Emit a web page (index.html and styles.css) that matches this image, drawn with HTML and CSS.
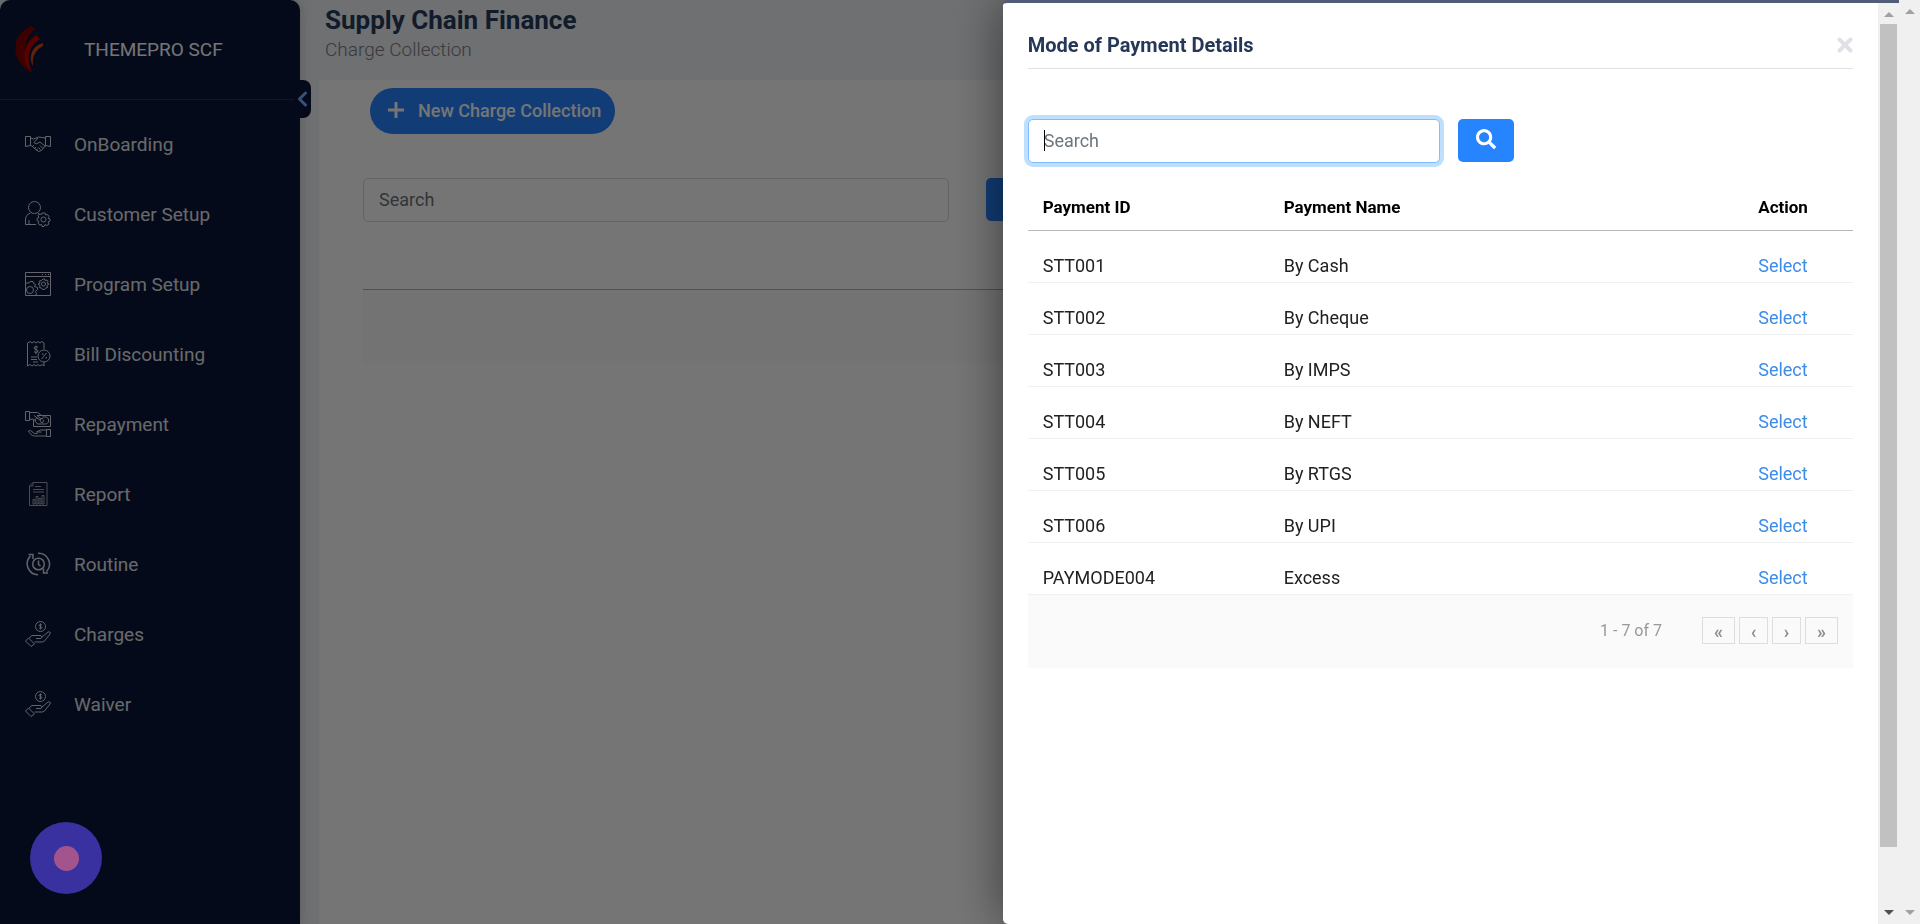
FILE: index.html
```
<!DOCTYPE html>
<html lang="en">
<head>
<meta charset="utf-8">
<title>Supply Chain Finance - Charge Collection</title>
<link rel="stylesheet" href="styles.css">
</head>
<body>
<div class="app">
  <aside class="sidebar">
    <div class="brand">
      <svg class="logo" viewBox="0 0 30 48" aria-hidden="true">
        <path fill="#860000" d="M16 0 20 3C9 12 6 30 17 47-4 37-6 10 16 0Z"/>
        <path fill="#c40000" d="M21 9 25 13C13 20 11 33 17 46 6 38 7 18 21 9Z"/>
        <path fill="#d84818" d="M28 17V20C20 24 17 31 18 40 13 31 17 20 28 17Z"/>
      </svg>
      <span class="brand-name">THEMEPRO SCF</span>
    </div>
    <button class="toggle" aria-label="Collapse menu"><svg viewBox="0 0 12 16"><path d="M8.500 2 2.500 8l6 6"/></svg></button>
    <nav class="menu">
      <a class="menu-item" href="#"><svg class="icon" viewBox="0 0 26 26"><path d="M.5 5.500h5v9l-5 1zM25.500 5.500h-5v9l5 1zM5.500 7l3 1 5-2 7 1M5.500 14l8 6.500 3-1 4-5M13 7l-4 4.500 2 1.500 4-2 5.500 4.500M7 16l2-2M9 18l2-2M11 19.500l2-2M15 14.500l3 3M13.500 16.500l2 2"/></svg>OnBoarding</a>
      <a class="menu-item" href="#"><svg class="icon" viewBox="0 0 26 26"><circle cx="9.500" cy="6.500" r="6"/><path d="M11 23.500H.5V19c0-4 2-6 5-7M4 23v-4M13 12l2 2"/><circle cx="18.500" cy="18.500" r="2.500"/><path d="m17 12 3 0 .5 2 2-.5 1.500 2-1 1.500 2 1v2l-2 1 1 2-2 1.500-2-1-1 2h-2l-.5-2-2 .5-1.500-2 1-1.500-2-1v-2l2-1-1-2 1.500-1.500 2 .5z"/></svg>Customer Setup</a>
      <a class="menu-item" href="#"><svg class="icon" viewBox="0 0 26 26"><path d="M.5 1.500h25v23H.5zM.5 5.500h25M17 3.500h1M20 3.500h1M23 3.500h1"/><circle cx="5" cy="19" r="3.500"/><circle cx="18.500" cy="13" r="2"/><path d="M1 12h3l1-1.500h3l.5 2 2 1-1 2 3 1v2l-2 2 1 2-1 2M18 8l1.500 0 .5 1.500 2-.5 1 1.500-1 1.500 2 1-2 1.500.5 2-2 .5-1 1.500h-2l-1-1.500-2-.5.5-2-2-1.500 2-1-.5-2 2-.5z"/></svg>Program Setup</a>
      <a class="menu-item" href="#"><svg class="icon" viewBox="0 0 26 26"><path d="M19 8V2l-2-1.500-2 1.500-2-1.500L11 2 9 .5 7 2 5 .5 2.500 2v23l2.500-1.500L7 25l2-1.500 2 1.500 2-1.500 2 1.500 2-1.500 2 1.500v-4M6 16h6M6 18.500h6M8 21h5M13 6.500c-1-1.500-4-1-4 .5 0 2 4 1 4 3s-3 2-4 .5M11 4.500V13"/><circle cx="19" cy="15" r="6"/><path d="m16.500 18 5-6M17 13h1v1M20.500 17h1v-1"/></svg>Bill Discounting</a>
      <a class="menu-item" href="#"><svg class="icon" viewBox="0 0 26 26"><path d="M.5.5h4v9h-4zM4.500 1.500h8l4 3M4.500 8.500 8 8l3 2M9 4.500l5 4 2-.5-4-3.500h13.500v11h-17V9M12 6.500l-1.500 2v2l2 2.500h9l2-2v-3l-2-2h-4"/><path d="M18 7.500c-3-1-4 4-1 4 2 0 2-2 1-3M21.500 18.500h4v7h-4zM21.500 19h-6l-4 2h5M21.500 25H9.500c-3 0-5-3-6-5l2-.5 4 3h3"/></svg>Repayment</a>
      <a class="menu-item" href="#"><svg class="icon faint" viewBox="0 0 26 26"><path d="M8 1.500h14v23H4.500V5zM8 1.500V5H4.500M10 5.500h6M8 8.500h11M8 11h11M8 18.500h2V23H8zM11 15.500h2V23h-2zM14 17.500h2V23h-2zM17 14.500h2V23h-2z"/></svg>Report</a>
      <a class="menu-item" href="#"><svg class="icon" viewBox="0 0 26 26"><g stroke-width="1.500"><circle cx="13.500" cy="13" r="5.800"/><path d="M13.500 9.500v4l2 1.500M13 2.200a11 11 0 0 1 8.500 18.500M13 23.800A11 11 0 0 1 5.500 5M3.500 3.500H8V8M18.500 17.500V22H23"/></g></svg>Routine</a>
      <a class="menu-item" href="#"><svg class="icon" viewBox="0 0 26 26"><circle cx="15.500" cy="5.500" r="5"/><path d="M17 4c-1-1-3-.5-3 .5s3 1 3 2-2 1.500-3 .5M15.500 2.500v6M.5 20l3-3 6 6-3.500 2.500zM4 17l3-2.500h9l1 1.500-1 1.500h-5M17 16l6-5c2-.5 3 .5 2 2l-5.500 7-2 1h-8"/></svg>Charges</a>
      <a class="menu-item" href="#"><svg class="icon" viewBox="0 0 26 26"><circle cx="15.500" cy="5.500" r="5"/><path d="M17 4c-1-1-3-.5-3 .5s3 1 3 2-2 1.500-3 .5M15.500 2.500v6M.5 20l3-3 6 6-3.500 2.500zM4 17l3-2.500h9l1 1.500-1 1.500h-5M17 16l6-5c2-.5 3 .5 2 2l-5.500 7-2 1h-8"/></svg>Waiver</a>
    </nav>
  </aside>
  <main class="main">
    <header class="page-head">
      <h1 class="page-title">Supply Chain Finance</h1>
      <p class="page-sub">Charge Collection</p>
    </header>
    <section class="content">
      <button class="new-btn"><svg viewBox="0 0 16 16" aria-hidden="true"><path d="M8 1v14M1 8h14"/></svg>New Charge Collection</button>
      <div class="search-row">
        <input class="field main-field" type="text" placeholder="Search" aria-label="Search charges">
        <button class="search-btn" aria-label="Search charges"></button>
      </div>
      <div class="empty-grid"></div>
    </section>
  </main>
  <div class="scrollbar"><i class="up"></i><i class="down"></i></div>
</div>
<div class="overlay">
  <div class="modal" role="dialog" aria-labelledby="dialog-title">
    <div class="modal-body">
      <header class="modal-head">
        <h2 class="modal-title" id="dialog-title">Mode of Payment Details</h2>
        <button class="close" aria-label="Close"><svg viewBox="0 0 16 16"><path d="m2.500 2.500 11 11M13.500 2.500l-11 11"/></svg></button>
      </header>
      <div class="modal-search">
        <div class="field-wrap">
          <input class="field active" type="text" placeholder="Search" aria-label="Search payment modes">
          <span class="caret"></span>
        </div>
        <button class="search-btn" aria-label="Search payment modes"><svg viewBox="0 0 512 512"><path d="M505 442.700L405.300 343c-4.500-4.500-10.600-7-17-7H372c27.600-35.300 44-79.700 44-128C416 93.100 322.900 0 208 0S0 93.100 0 208s93.100 208 208 208c48.300 0 92.700-16.400 128-44v16.300c0 6.400 2.500 12.500 7 17l99.700 99.700c9.400 9.400 24.600 9.400 33.900 0l28.300-28.300c9.400-9.400 9.400-24.600.1-34zM208 336c-70.700 0-128-57.200-128-128 0-70.700 57.200-128 128-128 70.700 0 128 57.200 128 128 0 70.700-57.200 128-128 128z"/></svg></button>
      </div>
      <table class="grid">
        <thead><tr><th class="col-id">Payment ID</th><th class="col-name">Payment Name</th><th>Action</th></tr></thead>
        <tbody>
          <tr><td>STT001</td><td>By Cash</td><td><a href="#">Select</a></td></tr>
          <tr><td>STT002</td><td>By Cheque</td><td><a href="#">Select</a></td></tr>
          <tr><td>STT003</td><td>By IMPS</td><td><a href="#">Select</a></td></tr>
          <tr><td>STT004</td><td>By NEFT</td><td><a href="#">Select</a></td></tr>
          <tr><td>STT005</td><td>By RTGS</td><td><a href="#">Select</a></td></tr>
          <tr><td>STT006</td><td>By UPI</td><td><a href="#">Select</a></td></tr>
          <tr><td>PAYMODE004</td><td>Excess</td><td><a href="#">Select</a></td></tr>
        </tbody>
      </table>
      <footer class="pager">
        <span class="range">1 - 7 of 7</span>
        <button class="page-btn wide">«</button>
        <button class="page-btn">‹</button>
        <button class="page-btn">›</button>
        <button class="page-btn wide">»</button>
      </footer>
    </div>
    <div class="scrollbar inner"><i class="up"></i><i class="thumb"></i><i class="down"></i></div>
  </div>
</div>
<button class="recorder" aria-label="Recorder"><span></span></button>
</body>
</html>
```
FILE: styles.css
```
* { box-sizing: border-box; }
body { margin: 0; font-family: Roboto, "Liberation Sans", sans-serif; font-size: 18px; background: #f0f3f8; overflow: hidden; }
button { font: inherit; border: 0; padding: 0; cursor: pointer; }
h1, h2, p { margin: 0; }
a { text-decoration: none; }

.app { display: flex; height: 100vh; }

.sidebar { position: relative; flex: 0 0 300px; background: #091639; color: #fff; border-radius: 10px 10px 0 0; box-shadow: 0 0 12px rgba(0, 0, 0, .2); }
.brand { display: flex; align-items: center; height: 100px; padding-left: 15px; margin-right: 6px; border-bottom: 1px solid #283450; }
.logo { width: 30px; height: 48px; }
.brand-name { margin-left: 39px; font-size: 19px; }
.toggle { position: absolute; top: 80px; right: -11px; width: 16px; height: 38px; background: #091639; border-radius: 0 8px 8px 0; display: flex; align-items: center; justify-content: center; }
.toggle svg { width: 12px; height: 16px; fill: none; stroke: #7cb0ff; stroke-width: 3; stroke-linecap: round; stroke-linejoin: round; }
.menu { padding-top: 9px; }
.menu-item { display: flex; align-items: center; gap: 23px; height: 70px; padding-left: 25px; color: #e4e4e8; font-size: 19px; }
.icon { width: 26px; height: 26px; fill: none; stroke: #d8dce6; stroke-width: 1; }
.icon.faint { stroke: #a0a6b4; }

.main { flex: 1; min-width: 0; display: flex; flex-direction: column; padding-left: 19px; }
.page-head { height: 80px; padding: 4px 6px; }
.page-title { font-size: 26px; line-height: 32px; font-weight: 700; color: #253c5c; }
.page-sub { font-size: 19px; line-height: 28px; font-weight: 300; color: #7c7e84; }
.content { flex: 1; background: #fff; padding: 8px 44px; }
.new-btn { display: flex; align-items: center; gap: 14px; height: 46px; margin-left: 7px; padding: 0 14px 2px 18px; border-radius: 23px; background: #2684ff; color: #fff; font-weight: 500; }
.new-btn svg { width: 16px; height: 16px; fill: none; stroke: #fff; stroke-width: 3; stroke-linecap: round; }
.search-row { display: flex; gap: 37px; margin-top: 44px; }
.field { width: 100%; height: 44px; padding: 0 15px 2px; border: 1px solid #d5d8dc; border-radius: 5px; background: #fff; font: inherit; outline: 0; }
.field::placeholder { color: #6c757d; opacity: 1; }
.main-field { width: 39.3%; }
.search-btn { width: 56px; height: 43px; border-radius: 5px; background: #2684ff; }
.search-btn svg { display: block; width: 20px; height: 20px; margin: -4px auto 0; fill: #fff; }
.empty-grid { height: 74px; margin-top: 67px; border-top: 1px solid #b0b0b0; background: #fafafa; }

.scrollbar { flex: 0 0 21px; display: flex; flex-direction: column; align-items: center; justify-content: space-between; padding: 9px 0; background: #f0f0f0; }
.up, .down { border: 5px solid transparent; }
.up { border-top: 0; border-bottom-color: #a0a0a0; }
.down { border-bottom: 0; border-top-color: #a0a0a0; }
.scrollbar.inner { justify-content: flex-start; }
.inner .up { margin-bottom: 7px; }
.inner .thumb { flex: 0 1 823px; width: 17px; background: #c1c1c1; }
.inner .down { margin-top: auto; border-top-color: #505050; }

.overlay { position: fixed; inset: 0 21px 0 0; display: flex; justify-content: flex-end; background: rgba(0, 0, 0, .54); }
.modal { display: flex; width: 47.2%; border-top: 3px solid #515c76; background: #fff; border-radius: 5px 0 0 5px; box-shadow: 0 0 50px rgba(0, 0, 0, .5); clip-path: inset(0 0 0 -100px); }
.modal-body { flex: 1; padding: 23px 25px; }
.modal-head { display: flex; align-items: center; justify-content: space-between; height: 43px; padding-bottom: 5px; border-bottom: 1px solid #dee2e6; }
.modal-title { font-size: 20px; font-weight: 700; color: #253858; }
.close { background: none; }
.close svg { display: block; width: 16px; height: 16px; fill: none; stroke: #dfe1e6; stroke-width: 4; stroke-linecap: round; }
.modal-search { display: flex; gap: 18px; margin-top: 50px; }
.field-wrap { position: relative; width: 50%; }
.field.active { border-color: #80bdff; box-shadow: 0 0 0 4px #bfdfff; }
.caret { position: absolute; left: 16px; top: 11px; width: 1px; height: 21px; background: #000; }
.grid { width: 100%; border-spacing: 0; table-layout: fixed; }
.grid th { height: 68px; padding: 32px 15px 10px; line-height: 25px; border-bottom: 1px solid #b8b8b8; text-align: left; font-size: 17px; font-weight: 700; color: #000; }
.grid td { padding: 23px 15px 5px; line-height: 23px; border-bottom: 1px solid #f0f0f0; color: #212121; }
.grid a { color: #3c8ce8; }
.col-id { width: 29.2%; }
.col-name { width: 57.5%; }
.pager { display: flex; align-items: center; justify-content: flex-end; gap: 4px; height: 73px; padding: 0 15px 2px 0; background: #fafafa; color: #999; }
.range { margin-right: 36px; font-size: 16px; }
.page-btn { width: 29px; height: 27px; border: 1px solid #dedede; background: #fafafa; color: #8c8c94; font-weight: 700; line-height: 27px; }
.page-btn.wide { width: 33px; }

.recorder { position: fixed; left: 30px; bottom: 30px; width: 72px; height: 72px; border-radius: 50%; background: #3931a0; display: flex; align-items: center; justify-content: center; }
.recorder span { width: 25px; height: 25px; border-radius: 50%; background: #a4548c; }
```
